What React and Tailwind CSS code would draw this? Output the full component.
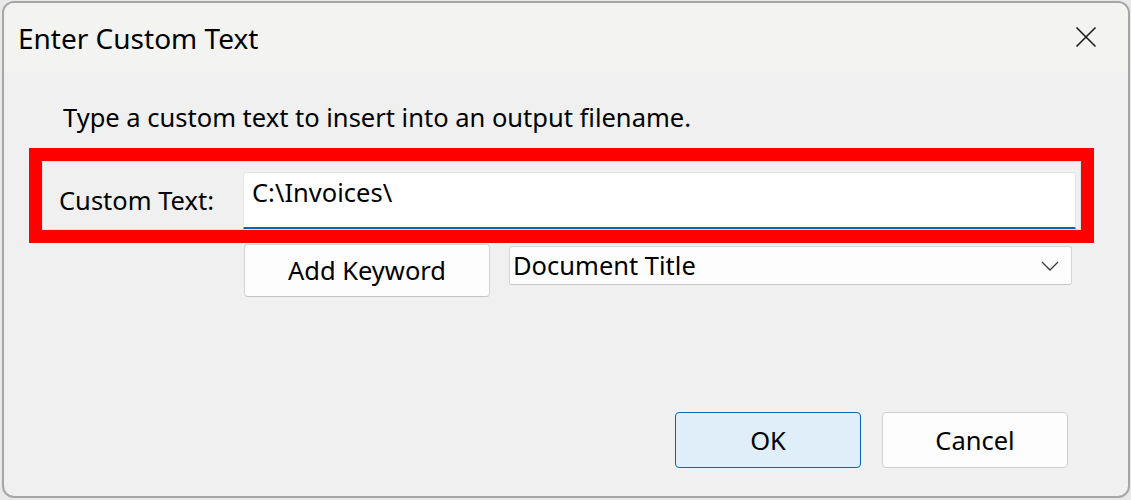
import React from "react";

export default function App() {
  return (
    <div className="w-[1131px] h-[500px] bg-[#e9e9e9] pl-[2px] pt-[1px] font-['Noto_Sans',sans-serif] text-black overflow-hidden">
      <div className="w-[1128px] h-[497px] border-2 border-[#a6a6a6] rounded-[12px] overflow-hidden flex flex-col bg-[#f0f0f0]">
        {/* Title bar */}
        <div className="h-[69px] shrink-0 bg-[#f3f3f1] flex items-center justify-between pl-[14px] pr-[31px]">
          <span className="text-[28px] leading-none">Enter Custom Text</span>
          <svg width="22" height="22" viewBox="0 0 22 22" className="mt-[-2px]">
            <path d="M1.5 1.5 L20.5 20.5 M20.5 1.5 L1.5 20.5" stroke="#1b1b1b" strokeWidth="1.6" fill="none" />
          </svg>
        </div>

        {/* Body */}
        <div className="flex-1 flex flex-col text-[25.5px]">
          <div className="mt-[25px] h-[40px] flex items-center pl-[59px]">
            Type a custom text to insert into an output filename.
          </div>

          {/* Red highlight box */}
          <div className="mt-[11px] ml-[25px] w-[1065px] h-[95px] border-[13px] border-[#ff0000]">
            <div className="w-full h-full border border-[#dedede] flex items-start">
              <div className="w-[200px] shrink-0 mt-[18px] h-[40px] flex items-center pl-[16px]">
                Custom Text:
              </div>
              <div className="mt-[10px] h-[57px] flex-1 mr-[4px] bg-white border border-[#e6e6e6] border-b-2 border-b-[#0067c0] rounded-t-[3px] pl-[8px]">
                <div className="h-[38px] flex items-center">C:\Invoices\</div>
              </div>
            </div>
          </div>

          {/* Keyword row */}
          <div className="flex items-start">
            <div className="ml-[240px] mt-[1px] w-[246px] h-[53px] bg-[#fdfdfd] border border-[#d3d3d3] border-b-[#c4c4c4] rounded-[4px] flex items-center justify-center">
              Add Keyword
            </div>
            <div className="ml-[19px] mt-[3px] w-[563px] h-[39px] bg-[#fdfdfd] border border-[#d6d6d6] border-b-[#c8c8c8] rounded-[3px] flex items-center justify-between pl-[3px] pr-[12px]">
              <span>Document Title</span>
              <svg width="18" height="10" viewBox="0 0 18 10">
                <path d="M1 1 L9 9 L17 1" stroke="#3c3c3c" strokeWidth="1.3" fill="none" />
              </svg>
            </div>
          </div>

          <div className="flex-1" />

          {/* Buttons */}
          <div className="flex justify-end gap-[21px] pr-[60px] mb-[28px]">
            <div className="w-[186px] h-[56px] bg-[#e0eef9] border border-[#0067c0] rounded-[4px] flex items-center justify-center">
              OK
            </div>
            <div className="w-[186px] h-[56px] bg-[#fdfdfd] border border-[#d0d0d0] rounded-[4px] flex items-center justify-center">
              Cancel
            </div>
          </div>
        </div>
      </div>
    </div>
  );
}
